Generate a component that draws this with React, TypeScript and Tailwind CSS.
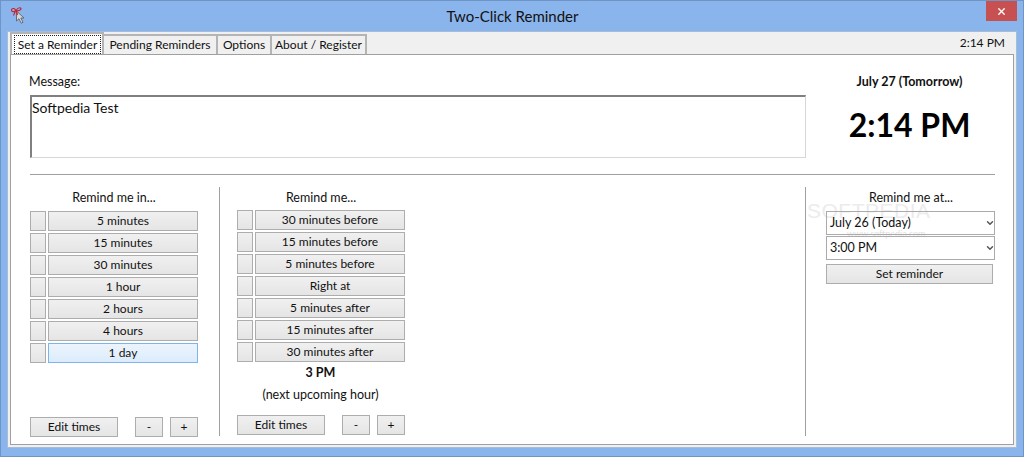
import { ChevronDown, X } from "lucide-react";

const inTimes = ["5 minutes", "15 minutes", "30 minutes", "1 hour", "2 hours", "4 hours", "1 day"];
const hourTimes = ["30 minutes before", "15 minutes before", "5 minutes before", "Right at", "5 minutes after", "15 minutes after", "30 minutes after"];
const btn = "border border-[#adadad] bg-gradient-to-b from-[#f0f0f0] to-[#e5e5e5] text-[12px] leading-none text-[#111] flex items-center justify-center";
const tab = "h-[20px] border-2 border-l-0 border-b-0 border-[#b4b4b4] text-center leading-[18px] whitespace-nowrap";

function TimeRow({ label, hot }: { label: string; hot?: boolean }) {
  return (
    <div className="flex gap-[2px] h-[20px]">
      <div className={`${btn} w-[16px]`} />
      <div className={hot ? "flex-1 border border-[#7eb4ea] bg-gradient-to-b from-[#ecf4fc] to-[#dcecfc] text-[12px] leading-none text-[#111] flex items-center justify-center" : `${btn} flex-1`}>
        {label}
      </div>
    </div>
  );
}

function Footer() {
  return (
    <div className="flex h-[20px]">
      <div className={`${btn} w-[88px]`}>Edit times</div>
      <div className={`${btn} w-[28px] ml-[17px]`}>-</div>
      <div className={`${btn} w-[28px] ml-[7px]`}>+</div>
    </div>
  );
}

function Select({ value }: { value: string }) {
  return (
    <div className="relative h-[24px] border border-[#ababab] flex items-center justify-between pl-[3px] text-[12.5px] text-[#111]">
      <span>{value}</span>
      <ChevronDown size={10} strokeWidth={3.5} className="text-[#555] -mr-[1px]" />
    </div>
  );
}

function BowIcon() {
  return (
    <svg width="16" height="18" viewBox="0 0 16 18" className="ml-[10px] mt-[6px]">
      <path d="M5.500 4v10l2.500-2.200 2.200 4.400 1.800-.9-2.200-4.300H13z" fill="#d4d8de" stroke="#5f6268" strokeWidth="0.9" />
      <path d="M5 3.500C3.500 1 .5 1 .5 3S3 5.500 5 3.500c1.500-2 3-3.200 4.500-2.500S9 4.500 5 3.500M4.500 4L2.500 8.500M5.500 4l1 4" fill="none" stroke="#c8202c" strokeWidth="1.100" />
    </svg>
  );
}

export default function App() {
  return (
    <div className="w-[1024px] h-[457px] bg-[#8ab4ec] border border-[#6f94c6] flex flex-col overflow-hidden text-[#111] font-['Lato','Open_Sans',sans-serif]">
      <div className="h-[30px] flex shrink-0">
        <div className="w-[32px]"><BowIcon /></div>
        <div className="flex-1 text-center text-[15px] leading-[30px] text-[#111] pl-[6px]">Two-Click Reminder</div>
        <div className="w-[31px] h-[20px] mr-[6px] bg-[#c75050] flex items-center justify-center">
          <X size={11} strokeWidth={3} className="text-white" />
        </div>
      </div>

      <div className="mx-[6px] mb-[8px] flex-1 flex flex-col bg-[#f0f0f0] border border-[#a7bcd8] pl-[2px] pr-[2px] pb-[2px]">
        <div className="h-[22px] flex items-end justify-between shrink-0">
          <div className="flex items-end text-[12px]">
            <div className="w-[94px] h-[22px] bg-white border-2 border-b-0 border-[#b4b4b4] pl-[2px] pr-[1px] pt-[1px] whitespace-nowrap">
              <span className="block text-center border border-dotted border-[#222] leading-[17px]">Set a Reminder</span>
            </div>
            <div className={`${tab} w-[114px]`}>Pending Reminders</div>
            <div className={`${tab} w-[54px]`}>Options</div>
            <div className={`${tab} w-[95px]`}>About / Register</div>
          </div>
          <div className="text-[12px] pr-[9px] self-center">2:14 PM</div>
        </div>

        <div className="flex-1 bg-white border border-[#a0a0a0] pl-[19px] pr-[18px] flex flex-col">
          <div className="flex h-[120px] shrink-0 border-b border-[#a0a0a0]">
            <div className="w-[776px] pt-[18px]">
              <div className="text-[12.5px] leading-[17px] -ml-[1px]">Message:</div>
              <div className="mt-[5px] h-[63px] border border-[#d6d6d6] border-t-2 border-l-2 border-t-[#808080] border-l-[#808080] text-[14px] leading-[22px]">Softpedia Test</div>
            </div>
            <div className="flex-1 flex flex-col items-center pt-[18px] pl-[18px]">
              <div className="text-[12.5px] font-bold leading-[17px]">July 27 (Tomorrow)</div>
              <div className="text-[32px] font-bold leading-[40px] mt-[15px] text-black">2:14 PM</div>
            </div>
          </div>

          <div className="flex-1 flex mt-[12px] mb-[8px]">
            <div className="w-[190px] pr-[21px] border-r border-[#a0a0a0] flex flex-col">
              <div className="text-[12.5px] leading-[17px] text-center mt-[2px] mb-[5px]">Remind me in...</div>
              <div className="flex flex-col gap-[2px]">
                {inTimes.map((t) => <TimeRow key={t} label={t} hot={t === "1 day"} />)}
              </div>
              <div className="mt-auto -mb-[1px]"><Footer /></div>
            </div>

            <div className="w-[586px] pl-[17px] border-r border-[#a0a0a0] flex flex-col">
              <div className="w-[168px] flex flex-col h-full">
                <div className="text-[12.5px] leading-[17px] text-center mt-[2px] mb-[4px]">Remind me...</div>
                <div className="flex flex-col gap-[2px]">
                  {hourTimes.map((t) => <TimeRow key={t} label={t} />)}
                </div>
                <div className="text-[12.5px] font-bold text-center leading-[17px] mt-[2px] pr-[1px]">3 PM</div>
                <div className="text-[12.5px] text-center leading-[17px] mt-[5px] pr-[1px]">(next upcoming hour)</div>
                <div className="mt-auto mb-[1px]"><Footer /></div>
              </div>
            </div>

            <div className="relative flex-1 pl-[20px] flex flex-col">
              <div className="absolute left-[1px] top-[11px] text-[21px] leading-[26px] tracking-[.5px] text-[#ececec] font-['Liberation_Sans',sans-serif]">SOFTPEDIA</div>
              <div className="absolute left-[41px] top-[41px] text-[9px] leading-[12px] text-[#e2e2e2]">www.softpedia.com</div>
              <div className="text-[12.5px] leading-[17px] text-center mt-[2px] mb-[5px] pl-[1px]">Remind me at...</div>
              <div className="flex flex-col gap-[1px]">
                <Select value="July 26 (Today)" />
                <Select value="3:00 PM" />
              </div>
              <div className={`${btn} h-[20px] mt-[4px] mr-[2px]`}>Set reminder</div>
            </div>
          </div>
        </div>
      </div>
    </div>
  );
}
